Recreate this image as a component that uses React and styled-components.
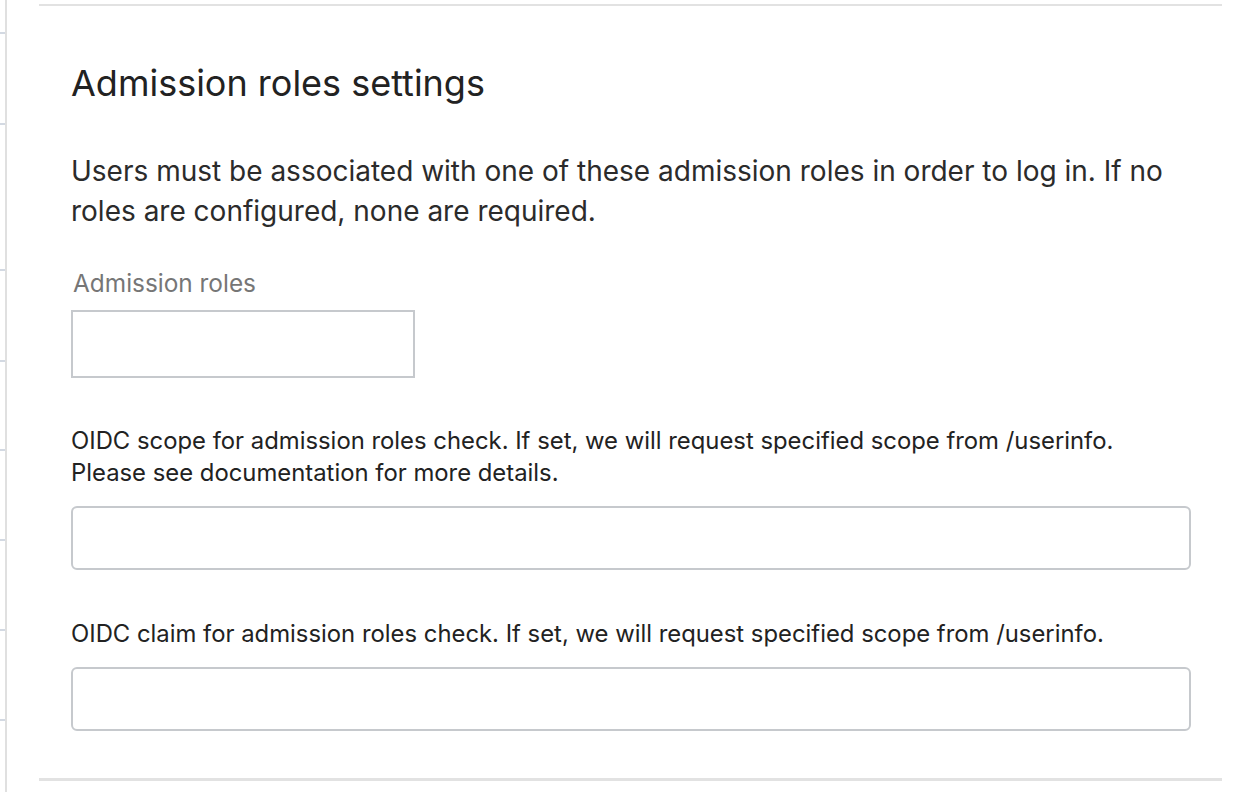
import React from 'react';
import styled, { createGlobalStyle } from 'styled-components';

const GlobalStyle = createGlobalStyle`
  html, body {
    margin: 0;
    padding: 0;
    background: #fff;
  }
  body {
    font-family: Inter, "Noto Sans", "Liberation Sans", sans-serif;
    color: #222;
  }
`;

const rowHeights = [34, 91, 146, 91, 89, 90, 90, 90, 90];

export default function App() {
  return (
    <>
      <GlobalStyle />
      <Page>
        <Sidebar>
          {rowHeights.map((h, i) => (
            <SideRow key={i} style={{ height: h - 2 }} />
          ))}
        </Sidebar>
        <Panel>
          <Title>Admission roles settings</Title>
          <Intro>
            Users must be associated with one of these admission roles in order to log in. If no
            roles are configured, none are required.
          </Intro>
          <Field gap="37px">
            <Label>Admission roles</Label>
            <TagBox />
          </Field>
          <Field gap="47px">
            <Help>
              OIDC scope for admission roles check. If set, we will request specified scope from /userinfo.
              <br />
              Please see documentation for more details.
            </Help>
            <TextInput type="text" />
          </Field>
          <Field gap="48px">
            <Help>OIDC claim for admission roles check. If set, we will request specified scope from /userinfo.</Help>
            <TextInput type="text" />
          </Field>
        </Panel>
      </Page>
    </>
  );
}

const Page = styled.div`
  display: flex;
  align-items: flex-start;
  width: 1248px;
  height: 792px;
  overflow: hidden;
`;

const Sidebar = styled.div`
  width: 5px;
  height: 792px;
  flex-shrink: 0;
  border-right: 2px solid #e0e0e0;
`;

const SideRow = styled.div`
  border-bottom: 2px solid #d3d9e2;
`;

const Panel = styled.section`
  margin: 4px 0 0 32px;
  width: 1183px;
  box-sizing: border-box;
  padding: 0 32px 47px 32px;
  border-top: 2px solid #e2e2e2;
  border-bottom: 3px solid #e2e2e2;
`;

const Title = styled.h2`
  margin: 0;
  padding-top: 55px;
  font-size: 36px;
  line-height: 44px;
  font-weight: 400;
  color: #222;
`;

const Intro = styled.p`
  margin: 46px 0 0;
  font-size: 28px;
  line-height: 40px;
  font-weight: 400;
  color: #2b2b2b;
`;

const Field = styled.div`
  display: flex;
  flex-direction: column;
  margin-top: ${(p) => p.gap};
`;

const Label = styled.label`
  font-size: 24.4px;
  line-height: 30px;
  color: #767676;
  padding-left: 2px;
  margin-bottom: 12px;
`;

const TagBox = styled.div`
  width: 344px;
  height: 68px;
  box-sizing: border-box;
  border: 2px solid #c6c9cd;
  background: #fff;
`;

const Help = styled.div`
  font-size: 23.85px;
  line-height: 32px;
  color: #222;
  margin-bottom: 17px;
`;

const TextInput = styled.input`
  width: 1120px;
  height: 64px;
  box-sizing: border-box;
  margin: 0;
  border: 2px solid #c6c9cd;
  border-radius: 6px;
  background: #fff;
  outline: none;
  font: inherit;
  padding: 0 16px;
`;
